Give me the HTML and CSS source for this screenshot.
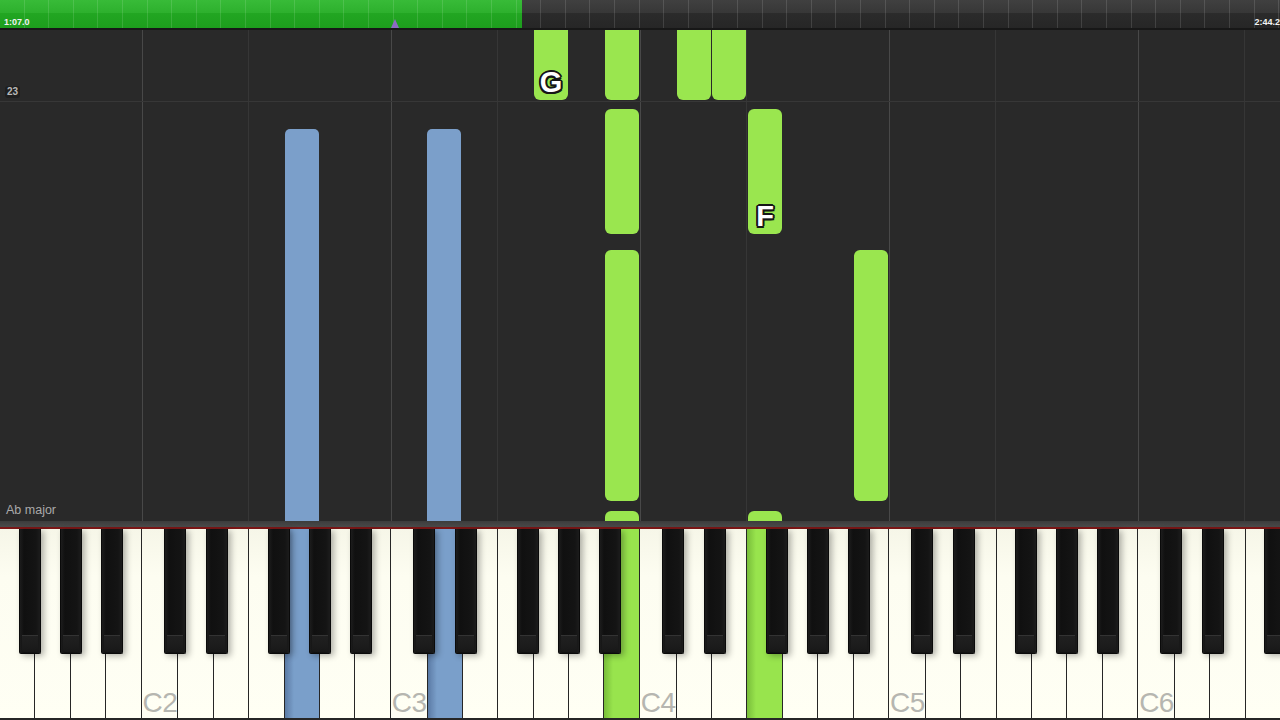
FILE: index.html
```html
<!DOCTYPE html>
<html>
<head>
<meta charset="utf-8">
<title>Piano roll</title>
<link rel="stylesheet" href="styles.css">
</head>
<body>
<div class="screen">
  <header class="timeline">
    <div class="progress" style="width:522px"></div>
    <div class="remaining"></div>
    <div class="ticks"></div>
    <span class="time time-start">1:07.0</span>
    <span class="time time-end">2:44.2</span>
    <svg class="marker" width="8" height="9" viewBox="0 0 8 9"><path d="M4 0 L8 9 L0 9 Z" fill="#8d6bc4"/></svg>
  </header>
  <div class="divider"></div>
  <main class="roll">
    <div class="gline gline-c" style="left:142px"></div>
    <div class="gline gline-c" style="left:391px"></div>
    <div class="gline gline-c" style="left:640px"></div>
    <div class="gline gline-c" style="left:889px"></div>
    <div class="gline gline-c" style="left:1138px"></div>
    <div class="gline gline-f" style="left:248px"></div>
    <div class="gline gline-f" style="left:497px"></div>
    <div class="gline gline-f" style="left:746px"></div>
    <div class="gline gline-f" style="left:995px"></div>
    <div class="gline gline-f" style="left:1244px"></div>
    <div class="measure-line" style="top:71px"></div>
    <span class="measure-num">23</span>

    <div class="note note-blue" style="left:285px;top:99px;height:420px"></div>
    <div class="note note-blue" style="left:427px;top:99px;height:420px"></div>

    <div class="note note-green" style="left:534px;top:-10px;height:80px"><span class="note-label">G</span></div>
    <div class="note note-green" style="left:605px;top:-10px;height:80px"></div>
    <div class="note note-green" style="left:677px;top:-10px;height:80px"></div>
    <div class="note note-green" style="left:712px;top:-10px;height:80px"></div>
    <div class="note note-green" style="left:605px;top:79px;height:125px"></div>
    <div class="note note-green" style="left:748px;top:79px;height:125px"><span class="note-label">F</span></div>
    <div class="note note-green" style="left:605px;top:220px;height:251px"></div>
    <div class="note note-green" style="left:854px;top:220px;height:251px"></div>
    <div class="note note-green" style="left:605px;top:481px;height:40px"></div>
    <div class="note note-green" style="left:748px;top:481px;height:40px"></div>

    <span class="key-sig">Ab major</span>
  </main>
  <div class="rail"></div>
  <div class="redline"></div>
  <div class="keyboard">
    <div class="white-keys">
      <div class="white first"></div>
      <div class="white"></div>
      <div class="white"></div>
      <div class="white"></div>
      <div class="white"><span class="label">C2</span></div>
      <div class="white"></div>
      <div class="white"></div>
      <div class="white"></div>
      <div class="white lit-blue"></div>
      <div class="white"></div>
      <div class="white"></div>
      <div class="white"><span class="label">C3</span></div>
      <div class="white lit-blue"></div>
      <div class="white"></div>
      <div class="white"></div>
      <div class="white"></div>
      <div class="white"></div>
      <div class="white lit-green"></div>
      <div class="white"><span class="label">C4</span></div>
      <div class="white"></div>
      <div class="white"></div>
      <div class="white lit-green"></div>
      <div class="white"></div>
      <div class="white"></div>
      <div class="white"></div>
      <div class="white"><span class="label">C5</span></div>
      <div class="white"></div>
      <div class="white"></div>
      <div class="white"></div>
      <div class="white"></div>
      <div class="white"></div>
      <div class="white"></div>
      <div class="white"><span class="label">C6</span></div>
      <div class="white"></div>
      <div class="white"></div>
      <div class="white"></div>
    </div>
    <div class="black" style="left:19px"></div>
    <div class="black" style="left:60px"></div>
    <div class="black" style="left:101px"></div>
    <div class="black" style="left:164px"></div>
    <div class="black" style="left:206px"></div>
    <div class="black" style="left:268px"></div>
    <div class="black" style="left:309px"></div>
    <div class="black" style="left:350px"></div>
    <div class="black" style="left:413px"></div>
    <div class="black" style="left:455px"></div>
    <div class="black" style="left:517px"></div>
    <div class="black" style="left:558px"></div>
    <div class="black" style="left:599px"></div>
    <div class="black" style="left:662px"></div>
    <div class="black" style="left:704px"></div>
    <div class="black" style="left:766px"></div>
    <div class="black" style="left:807px"></div>
    <div class="black" style="left:848px"></div>
    <div class="black" style="left:911px"></div>
    <div class="black" style="left:953px"></div>
    <div class="black" style="left:1015px"></div>
    <div class="black" style="left:1056px"></div>
    <div class="black" style="left:1097px"></div>
    <div class="black" style="left:1160px"></div>
    <div class="black" style="left:1202px"></div>
    <div class="black" style="left:1264px"></div>
  </div>
</div>
</body>
</html>
```

FILE: styles.css
```css
html, body {
  margin: 0;
  padding: 0;
  background: #111;
}

.screen {
  width: 1280px;
  height: 720px;
  overflow: hidden;
  display: flex;
  flex-direction: column;
  font-family: "Liberation Sans", Arial, sans-serif;
}

/* ---------- timeline ---------- */
.timeline {
  position: relative;
  height: 28px;
  flex: 0 0 28px;
  display: flex;
  background: #141414;
}

.progress {
  height: 100%;
  background: linear-gradient(#38bb38 0, #2db02d 13px, #22a622 13px, #1d9e1d 28px);
}

.remaining {
  flex: 1;
  height: 100%;
  background: linear-gradient(#404040 0, #373737 13px, #2b2b2b 13px, #262626 28px);
}

.ticks {
  position: absolute;
  inset: 0;
  background: repeating-linear-gradient(to right, transparent 0 23.6px, rgba(255, 255, 255, 0.12) 23.6px 24.6px);
}

.time {
  position: absolute;
  top: 17px;
  font-size: 9px;
  font-weight: 700;
  color: #f2f2f2;
  line-height: 10px;
}

.time-start { left: 4px; }
.time-end { right: 0; }

.marker {
  position: absolute;
  left: 391px;
  top: 19px;
}

.divider {
  height: 2px;
  flex: 0 0 2px;
  background: #171717;
}

/* ---------- piano roll ---------- */
.roll {
  position: relative;
  flex: 1;
  background: #292929;
  overflow: hidden;
}

.gline {
  position: absolute;
  top: 0;
  bottom: 0;
  width: 1px;
}

.gline-c { background: #484848; }
.gline-f { background: #363636; }

.measure-line {
  position: absolute;
  left: 0;
  right: 0;
  height: 1px;
  background: #373737;
}

.measure-num {
  position: absolute;
  left: 5px;
  top: 56px;
  padding: 0 2px;
  font-size: 10px;
  font-weight: 700;
  line-height: 12px;
  color: #b8b8b8;
  background: #1f1f1f;
  border-radius: 3px;
}

.note {
  position: absolute;
  width: 34px;
  border-radius: 6px;
}

.note-green { background: #9ae64f; }
.note-blue {
  background: #7b9fca;
  border-radius: 5px 5px 0 0;
}

.note-label {
  position: absolute;
  left: 0;
  right: 0;
  bottom: 3px;
  text-align: center;
  font-size: 29px;
  font-weight: 700;
  line-height: 1;
  color: #fff;
  text-shadow:
    2px 0 0 #161616, -2px 0 0 #161616, 0 2px 0 #161616, 0 -2px 0 #161616,
    1.5px 1.5px 0 #161616, -1.5px 1.5px 0 #161616, 1.5px -1.5px 0 #161616, -1.5px -1.5px 0 #161616;
}

.key-sig {
  position: absolute;
  left: 6px;
  bottom: 4px;
  font-size: 12.5px;
  color: #a9a9a9;
}

/* ---------- keyboard ---------- */
.rail {
  height: 6px;
  flex: 0 0 6px;
  background: linear-gradient(#3c3c3c, #4a4a4a);
}

.redline {
  height: 2px;
  flex: 0 0 2px;
  background: #7a1616;
}

.keyboard {
  position: relative;
  flex: 0 0 191px;
  height: 191px;
}

.white-keys {
  display: flex;
  height: 100%;
}

.white {
  flex: 1;
  position: relative;
  display: flex;
  align-items: flex-end;
  background: linear-gradient(#f6f6e8, #fdfdf1 25%, #fffff4);
  border-left: 1px solid #262626;
  box-shadow: inset 0 -2px 0 #262626;
}

.white.first { border-left: none; }

.white.lit-green {
  background: linear-gradient(to right, rgba(40, 90, 10, 0.28), rgba(40, 90, 10, 0) 9px), #98e44d;
}

.white.lit-blue {
  background: linear-gradient(to right, rgba(20, 40, 80, 0.3), rgba(20, 40, 80, 0) 9px), #7a9fca;
}

.label {
  margin: 0 0 3px 1px;
  font-size: 28px;
  line-height: 1;
  color: #b6b6b0;
  white-space: nowrap;
  letter-spacing: -0.5px;
}

.black {
  position: absolute;
  top: 0;
  width: 22px;
  height: 125px;
  box-sizing: border-box;
  background: linear-gradient(to right, #1c1c1c, #101010 20%, #141414 80%, #1c1c1c);
  border: 1px solid #0a0a0a;
  border-top: none;
  border-radius: 0 0 2px 2px;
  box-shadow: 3px 2px 6px rgba(0, 0, 0, 0.3);
}

.black::after {
  content: "";
  position: absolute;
  left: 2px;
  right: 2px;
  bottom: 1px;
  height: 17px;
  border-radius: 0 0 2px 2px;
  background: linear-gradient(#333 0 1px, #202020 1px, #1c1c1c 60%, #181818);
}
```
